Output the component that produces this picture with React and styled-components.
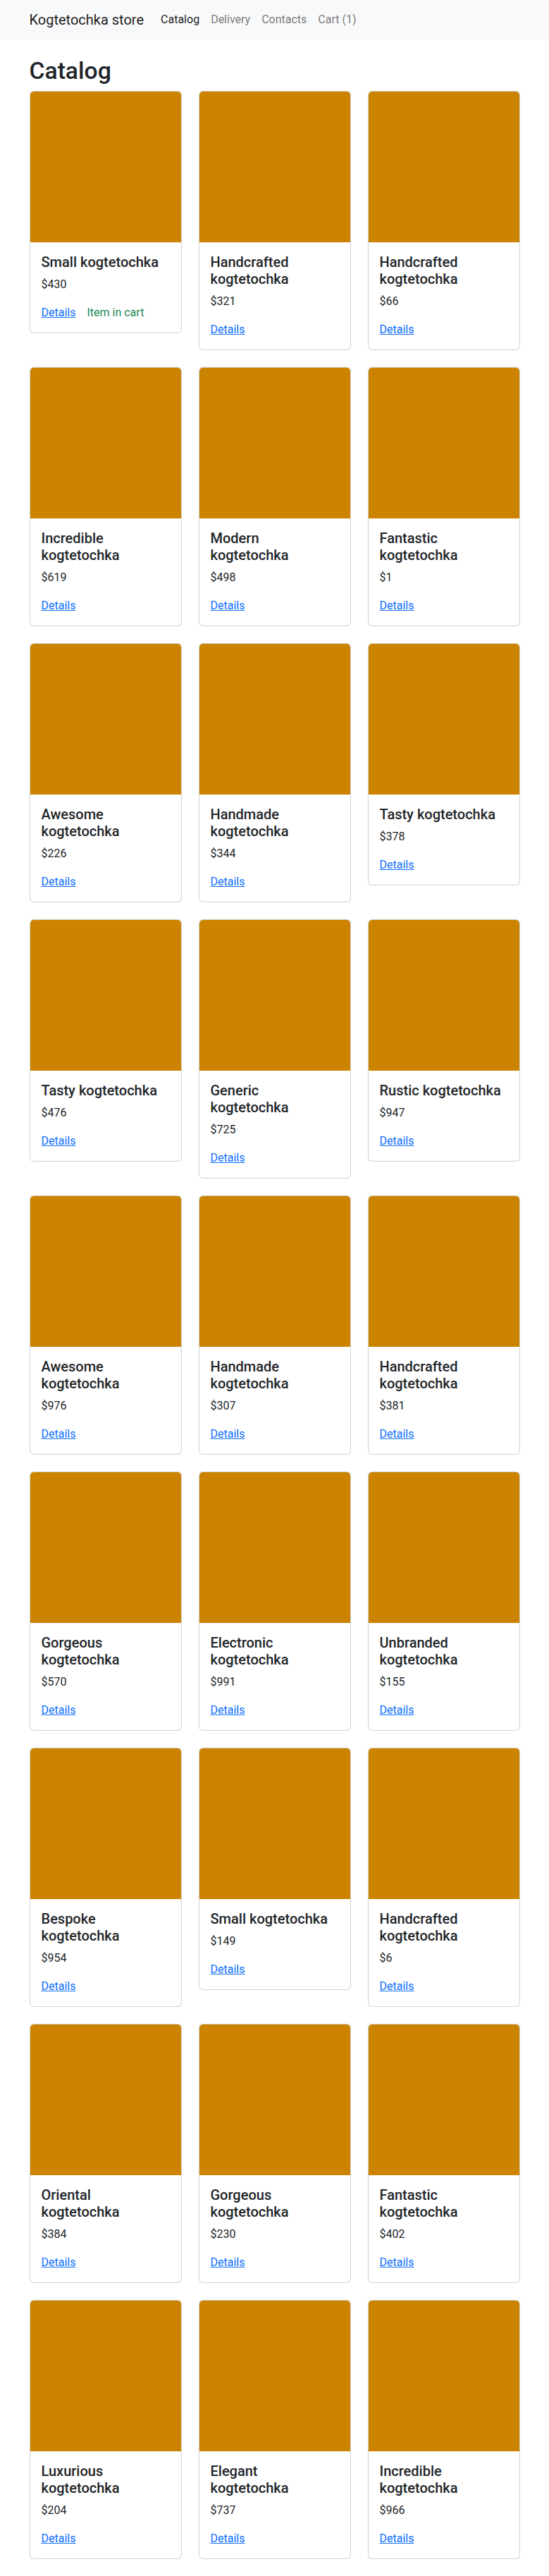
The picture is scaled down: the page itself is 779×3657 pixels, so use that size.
import React from "react";
import styled, { createGlobalStyle } from "styled-components";

const GlobalStyle = createGlobalStyle`
  *, *::before, *::after {
    box-sizing: border-box;
  }
  body {
    margin: 0;
    font-family: "Segoe UI", Roboto, "Noto Sans", "Liberation Sans", Arial, sans-serif;
    font-size: 16px;
    line-height: 1.5;
    color: #212529;
    background-color: #fff;
  }
`;

const products = [
  { id: 1, title: "Small kogtetochka", price: 430, inCart: true },
  { id: 2, title: "Handcrafted kogtetochka", price: 321 },
  { id: 3, title: "Handcrafted kogtetochka", price: 66 },
  { id: 4, title: "Incredible kogtetochka", price: 619 },
  { id: 5, title: "Modern kogtetochka", price: 498 },
  { id: 6, title: "Fantastic kogtetochka", price: 1 },
  { id: 7, title: "Awesome kogtetochka", price: 226 },
  { id: 8, title: "Handmade kogtetochka", price: 344 },
  { id: 9, title: "Tasty kogtetochka", price: 378 },
  { id: 10, title: "Tasty kogtetochka", price: 476 },
  { id: 11, title: "Generic kogtetochka", price: 725 },
  { id: 12, title: "Rustic kogtetochka", price: 947 },
  { id: 13, title: "Awesome kogtetochka", price: 976 },
  { id: 14, title: "Handmade kogtetochka", price: 307 },
  { id: 15, title: "Handcrafted kogtetochka", price: 381 },
  { id: 16, title: "Gorgeous kogtetochka", price: 570 },
  { id: 17, title: "Electronic kogtetochka", price: 991 },
  { id: 18, title: "Unbranded kogtetochka", price: 155 },
  { id: 19, title: "Bespoke kogtetochka", price: 954 },
  { id: 20, title: "Small kogtetochka", price: 149 },
  { id: 21, title: "Handcrafted kogtetochka", price: 6 },
  { id: 22, title: "Oriental kogtetochka", price: 384 },
  { id: 23, title: "Gorgeous kogtetochka", price: 230 },
  { id: 24, title: "Fantastic kogtetochka", price: 402 },
  { id: 25, title: "Luxurious kogtetochka", price: 204 },
  { id: 26, title: "Elegant kogtetochka", price: 737 },
  { id: 27, title: "Incredible kogtetochka", price: 966 },
];

const Navbar = styled.nav`
  background-color: #f8f9fa;
  padding: 8px 0;
`;

const Container = styled.div`
  max-width: 720px;
  margin: 0 auto;
  padding: 0 12px;
`;

const NavInner = styled(Container)`
  display: flex;
  align-items: center;
`;

const Brand = styled.a`
  font-size: 20px;
  line-height: 30px;
  padding: 5px 0;
  margin-right: 16px;
  color: rgba(0, 0, 0, 0.9);
  text-decoration: none;
  white-space: nowrap;
`;

const NavList = styled.div`
  display: flex;
`;

const NavLink = styled.a`
  padding: 8px;
  font-size: 16px;
  line-height: 24px;
  text-decoration: none;
  color: ${(p) => (p.$active ? "rgba(0, 0, 0, 0.9)" : "rgba(0, 0, 0, 0.55)")};
`;

const Main = styled(Container)`
  padding-top: 25px;
  padding-bottom: 24px;
`;

const Heading = styled.h1`
  margin: 0 0 8px;
  font-size: 33.7px;
  font-weight: 500;
  line-height: 1.2;
`;

const Grid = styled.div`
  display: grid;
  grid-template-columns: repeat(3, 1fr);
  gap: 24px;
  align-items: start;
`;

const Card = styled.div`
  border: 1px solid rgba(0, 0, 0, 0.175);
  border-radius: 6px;
  overflow: hidden;
  background: #fff;
`;

const CardImage = styled.div`
  aspect-ratio: 1 / 1;
  background-color: #cc8400;
`;

const CardBody = styled.div`
  padding: 16px;
`;

const CardTitle = styled.h5`
  margin: 0 0 8px;
  font-size: 20px;
  font-weight: 500;
  line-height: 1.2;
`;

const Price = styled.p`
  margin: 0 0 16px;
`;

const Actions = styled.div`
  display: flex;
  gap: 16px;
`;

const DetailsLink = styled.a`
  color: #0d6efd;
  text-decoration: underline;
`;

const InCart = styled.span`
  color: #198754;
`;

export default function App() {
  return (
    <>
      <GlobalStyle />
      <Navbar>
        <NavInner>
          <Brand href="#">Kogtetochka store</Brand>
          <NavList>
            <NavLink $active href="#">Catalog</NavLink>
            <NavLink href="#">Delivery</NavLink>
            <NavLink href="#">Contacts</NavLink>
            <NavLink href="#">Cart (1)</NavLink>
          </NavList>
        </NavInner>
      </Navbar>
      <Main>
        <Heading>Catalog</Heading>
        <Grid>
          {products.map((item) => (
            <Card key={item.id}>
              <CardImage />
              <CardBody>
                <CardTitle>{item.title}</CardTitle>
                <Price>${item.price}</Price>
                <Actions>
                  <DetailsLink href="#">Details</DetailsLink>
                  {item.inCart && <InCart>Item in cart</InCart>}
                </Actions>
              </CardBody>
            </Card>
          ))}
        </Grid>
      </Main>
    </>
  );
}
